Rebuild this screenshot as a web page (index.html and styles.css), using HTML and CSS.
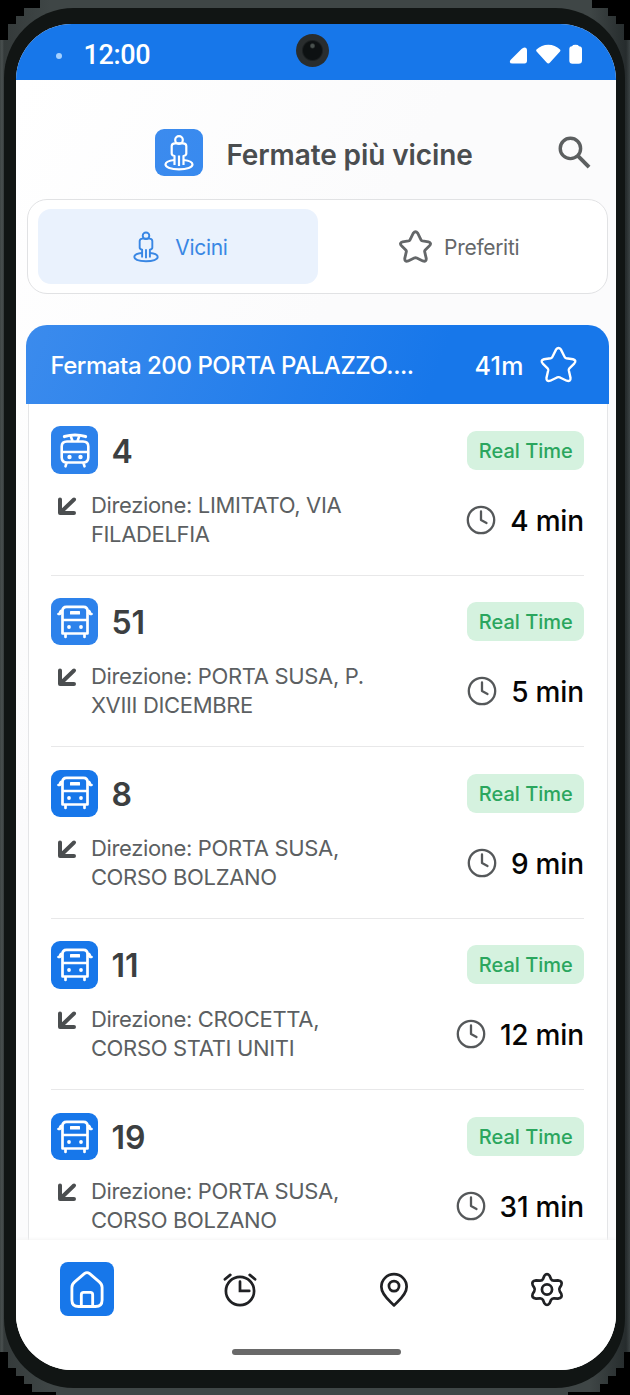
FILE: index.html
```
<!DOCTYPE html>
<html lang="it">
<head>
<meta charset="utf-8">
<title>Fermate più vicine</title>
<link rel="stylesheet" href="styles.css">
</head>
<body>
<svg class="sprite" aria-hidden="true">
  <symbol id="person" viewBox="0 0 30 36"><g fill="none" stroke="currentColor" stroke-width="2.200" stroke-linejoin="round"><circle cx="15" cy="5" r="3.800"/><path d="M11 8.300H19Q22.300 8.500 22.300 11V18.500Q22.300 20.500 19.500 21V30M11 8.300Q7.700 8.500 7.700 11V18.500Q7.700 20.500 10.500 21V30M15 20.500V31"/><path d="M10.500 25C5 25.500 1.500 27.300 1.500 29.600C1.500 32.400 7 34.400 15 34.400S28.500 32.400 28.500 29.600C28.500 27.300 25 25.500 19.500 25"/></g></symbol>
  <symbol id="star" viewBox="0 0 36 36"><path fill="none" stroke="currentColor" stroke-width="var(--sw)" stroke-linejoin="round" d="M15.600 3.500Q18 .4 20.400 3.500L24 10.700Q24.500 11.700 25.600 11.900L32.100 12.900Q36 14 33.300 17.100L28.600 21.700Q27.800 22.500 28 23.600L29.700 31Q30 35 26 33.800L19.400 30.600Q18 30 16.600 30.600L10 33.800Q6 35 6.300 31L8 23.600Q8.200 22.500 7.400 21.700L2.700 17.100Q0 14 3.900 12.900L10.400 11.900Q11.500 11.700 12 10.700Z"/></symbol>
  <symbol id="bus" viewBox="0 0 36 34"><g fill="none" stroke="currentColor" stroke-width="2.700" stroke-linejoin="round" stroke-linecap="round"><path d="M5.500 28.500V6Q5.500 1.800 9.500 1.800H26.500Q30.500 1.800 30.500 6V28.500ZM5.500 15H30.500M8.500 28.500V32M27.500 28.500V32M5.500 5.500Q3 5.500 2.800 9H1.500M30.500 5.500Q33 5.500 33.200 9H34.500"/></g><rect x="13" y="6" width="10" height="3.500" rx=".5" fill="currentColor"/><circle cx="12" cy="22" r="1.900" fill="currentColor"/><circle cx="24" cy="22" r="1.900" fill="currentColor"/></symbol>
  <symbol id="tram" viewBox="0 0 36 36"><g fill="none" stroke="currentColor" stroke-width="2.600" stroke-linejoin="round" stroke-linecap="round"><path d="M10 9.500H26Q31.300 9.500 31.300 14.500V25.500Q31.300 30.500 26 30.500H10Q4.700 30.500 4.700 25.500V14.500Q4.700 9.500 10 9.500ZM4.700 20H31.300M9.500 31L8.500 34.300M26.500 31L27.500 34.300M15.500 9L13.500 3.500M20.500 9L22.500 3.500"/><path d="M7.500 4.500Q18 1.500 28.500 4.500" stroke-width="3.200"/></g><circle cx="12.500" cy="25" r="2.200" fill="currentColor"/><circle cx="23.500" cy="25" r="2.200" fill="currentColor"/></symbol>
  <symbol id="arrow" viewBox="0 0 20 20"><path d="M17 3.500 4 16M3 3.500V17H17" fill="none" stroke="currentColor" stroke-width="4" stroke-linejoin="round" stroke-linecap="round"/></symbol>
  <symbol id="clock" viewBox="0 0 30 30"><g fill="none" stroke="currentColor" stroke-width="2.300" stroke-linecap="round"><circle cx="15" cy="15" r="13.200"/><path d="M15 6.500V15L20.500 18" stroke-linejoin="round"/></g></symbol>
</svg>
<div class="device">
<div class="bezel">
<main class="screen">
  <header class="status">
    <i class="dot"></i><span class="time">12:00</span>
    <svg class="signals" viewBox="0 0 74 20" fill="#fff"><path d="M15.500 3.500Q18 3.500 18 6.500V16.500Q18 19.500 15.500 19.500H3.500Q-.5 19.500 1.500 16L12.500 5Q14 3.500 15.500 3.500Z"/><path d="M27.500 5.500Q32.500 .8 39.300 .8T51 5.500Q51.800 6.500 51 7.500L41 18.500Q39.300 20.500 37.600 18.500L27.600 7.500Q26.800 6.500 27.500 5.500Z"/><path d="M63 2.200Q63.500 .8 66.500 .8T70 2.200Q73 2.500 73 5V16.500Q73 19.800 69.500 19.800H63.500Q60.300 19.800 60.300 16.500V5Q60.300 2.500 63 2.200Z"/></svg>
    <i class="camera"></i>
  </header>
  <div class="content">
    <div class="title-bar">
      <span class="tile"><svg class="ic-person"><use href="#person"/></svg></span>
      <h1>Fermate più vicine</h1>
      <svg class="search" viewBox="0 0 34 34" fill="none" stroke="#5c5f60"><circle cx="12.800" cy="12.800" r="10.500" stroke-width="3.500"/><path d="M20.500 20.500 32 32" stroke-width="4"/></svg>
    </div>
    <nav class="tabs">
      <div class="tab active"><svg class="ic-near"><use href="#person"/></svg><span>Vicini</span></div>
      <div class="tab saved"><svg class="ic-fav"><use href="#star"/></svg><span>Preferiti</span></div>
    </nav>
    <section class="card">
      <div class="stop"><span class="stop-name">Fermata 200 PORTA PALAZZO....</span><span class="distance">41m</span><svg class="ic-star"><use href="#star"/></svg></div>
      <div class="lines">
        <article class="line">
          <div class="line-top"><span class="tile"><svg class="ic-tram"><use href="#tram"/></svg></span><b>4</b><span class="live">Real Time</span></div>
          <div class="line-info"><svg class="ic-arrow"><use href="#arrow"/></svg><p>Direzione: LIMITATO, VIA<br>FILADELFIA</p><svg class="ic-clock"><use href="#clock"/></svg><span class="wait">4 min</span></div>
        </article>
        <article class="line">
          <div class="line-top"><span class="tile"><svg class="ic-bus"><use href="#bus"/></svg></span><b>51</b><span class="live">Real Time</span></div>
          <div class="line-info"><svg class="ic-arrow"><use href="#arrow"/></svg><p>Direzione: PORTA SUSA, P.<br>XVIII DICEMBRE</p><svg class="ic-clock"><use href="#clock"/></svg><span class="wait">5 min</span></div>
        </article>
        <article class="line">
          <div class="line-top"><span class="tile deep"><svg class="ic-bus"><use href="#bus"/></svg></span><b>8</b><span class="live">Real Time</span></div>
          <div class="line-info"><svg class="ic-arrow"><use href="#arrow"/></svg><p>Direzione: PORTA SUSA,<br>CORSO BOLZANO</p><svg class="ic-clock"><use href="#clock"/></svg><span class="wait">9 min</span></div>
        </article>
        <article class="line">
          <div class="line-top"><span class="tile deep"><svg class="ic-bus"><use href="#bus"/></svg></span><b>11</b><span class="live">Real Time</span></div>
          <div class="line-info"><svg class="ic-arrow"><use href="#arrow"/></svg><p>Direzione: CROCETTA,<br>CORSO STATI UNITI</p><svg class="ic-clock"><use href="#clock"/></svg><span class="wait">12 min</span></div>
        </article>
        <article class="line">
          <div class="line-top"><span class="tile deep"><svg class="ic-bus"><use href="#bus"/></svg></span><b>19</b><span class="live">Real Time</span></div>
          <div class="line-info"><svg class="ic-arrow"><use href="#arrow"/></svg><p>Direzione: PORTA SUSA,<br>CORSO BOLZANO</p><svg class="ic-clock"><use href="#clock"/></svg><span class="wait">31 min</span></div>
        </article>
      </div>
    </section>
  </div>
  <footer class="bottom">
    <nav class="menu">
      <span class="home"><svg viewBox="0 0 36 40" fill="none" stroke="#fff" stroke-width="3" stroke-linejoin="round"><path d="M15.200 3.200Q18 1 20.800 3.200L31 12Q34 14.500 34 18V31Q34 38 27 38H9Q2 38 2 31V18Q2 14.500 5 12ZM12 38V25.500Q12 23 14.500 23H21.500Q24 23 24 25.500V38"/></svg></span>
      <svg viewBox="0 0 36 36" fill="none" stroke="#202124" stroke-width="2.800"><circle cx="18" cy="19.500" r="14.500"/><path d="M18 10V19.500H27.500M2.500 7.500 8 3M33.500 7.500 28 3" stroke-linecap="round"/></svg>
      <svg viewBox="0 0 36 36" fill="none" stroke="#202124" stroke-width="2.800" stroke-linejoin="round"><path d="M18 34.300C15.500 31 5 24.500 5 15.200A13 13 0 0 1 31 15.200C31 24.500 20.500 31 18 34.300Z"/><circle cx="18" cy="14.500" r="5.200"/></svg>
      <svg viewBox="0 0 36 36" fill="none" stroke="#202124" stroke-width="2.800" stroke-linejoin="round"><path d="M15.300 3.900Q18 .3 20.700 3.900L22 7Q23 9 25.200 8.900L29.300 8.700Q34.300 9.200 32.700 13.500L31.100 16.200Q30 18 31.100 19.800L32.700 22.500Q34.300 26.800 29.300 27.300L25.200 27.100Q23 27 22 29L20.700 32.100Q18 35.700 15.300 32.100L14 29Q13 27 10.800 27.100L6.700 27.300Q1.700 26.800 3.300 22.500L4.900 19.800Q6 18 4.900 16.200L3.300 13.500Q1.700 9.200 6.700 8.700L10.800 8.900Q13 9 14 7Z"/><circle cx="18" cy="18" r="5.200"/></svg>
    </nav>
    <i class="handle"></i>
  </footer>
</main>
</div>
</div>
</body>
</html>
```
FILE: styles.css
```
* { box-sizing: border-box; }
body { margin: 0; background: #000; font-family: Inter, "Liberation Sans", sans-serif; color: #3c3f41; }
svg { display: block; flex: none; }
.sprite { position: absolute; width: 0; height: 0; }
.device {
  width: 630px; height: 1395px; padding: 8px 5px 7px 4px;
  background: linear-gradient(90deg, #3c4342 0, #4a5050 2px, #343a3a 4px, #3f4646 50px, #3f4646 590px, #262c2d 626px, #3c4344 630px);
  clip-path: polygon(40px 0, 592px 0, 592px 8px, 608px 8px, 608px 16px, 616px 16px, 616px 24px, 624px 24px, 624px 40px, 630px 40px, 630px 1352px, 624px 1352px, 624px 1368px, 616px 1368px, 616px 1376px, 608px 1376px, 608px 1384px, 600px 1384px, 600px 1392px, 568px 1392px, 568px 1395px, 56px 1395px, 56px 1392px, 32px 1392px, 32px 1384px, 24px 1384px, 24px 1376px, 16px 1376px, 16px 1368px, 8px 1368px, 8px 1352px, 0 1352px, 0 40px, 8px 40px, 8px 24px, 16px 24px, 16px 16px, 24px 16px, 24px 8px, 40px 8px);
}
.bezel { height: 100%; padding: 16px 9px 17px 12.400px; border-radius: 70px; background: #111514; }
.screen { height: 1346px; width: 600px; display: flex; flex-direction: column; overflow: hidden; border-radius: 56px; background: #fff; }
.status { position: relative; flex: none; height: 56px; padding: 5px 33px 0 40px; display: flex; align-items: center; background: #1777ea; color: #fff; }
.dot { width: 6px; height: 6px; border-radius: 50%; background: #a5d1ff; margin-top: 3px; }
.time { margin-left: 21px; font: 500 27px/30px Roboto, sans-serif; letter-spacing: -.3px; padding-top: 1px; }
.signals { width: 74px; height: 20px; margin-left: auto; margin-top: -1px; }
.camera { position: absolute; left: 279.600px; top: 10px; width: 33px; height: 33px; border-radius: 50%; background: radial-gradient(circle at 50% 36%, #49514e 0 1.500px, transparent 3px), radial-gradient(circle, #0d1112 0 9px, #292d2e 11px); }
.content { flex: 1; min-height: 0; overflow: hidden; padding: 45px 7.600px 0 10px; background: linear-gradient(120deg, #fff, #fbfbfc 35%); }
.title-bar { height: 55px; padding: 0 18px 0 129px; display: flex; align-items: center; }
.tile { width: 47.500px; height: 47.500px; flex: none; display: grid; place-items: center; border-radius: 9px; background: linear-gradient(120deg, #3c8bee, #388aef); color: #fff; }
.ic-person { width: 30px; height: 36px; }
h1 { margin: 0 0 0 23.500px; font-size: 28px; line-height: 36px; font-weight: 600; letter-spacing: -.1px; color: #4a4d4f; padding-top: 4px; }
.search { width: 33px; height: 33px; margin-left: auto; }
.tabs { margin: 19px 0 0 1px; width: 581px; height: 95px; border: 1.500px solid #e1e2e4; border-radius: 20px; padding: 9px 9px 9px 9.600px; display: grid; grid-template-columns: 280px 1fr; background: #fff; }
.tab { display: flex; align-items: center; justify-content: center; font-size: 21px; line-height: 26px; letter-spacing: -.3px; color: #646769; border-radius: 13px; }
.tab span { padding-top: 2px; }
.tab.active { padding-left: 5px; background: #eaf2fd; color: #3987e4; }
.tab.saved { padding-left: 2px; }
.ic-near { width: 26px; height: 32px; margin-right: 16px; }
.ic-fav { width: 33px; height: 33px; margin-right: 12px; --sw: 3.100; }
.card { margin-top: 31px; }
.stop { height: 79px; padding: 2px 32px 0 24px; display: flex; align-items: center; border-radius: 21px 21px 0 0; color: #fff; background: linear-gradient(110deg, #3b8bed 0, #1777ea 70%); font-size: 24px; line-height: 32px; font-weight: 500; }
.stop-name { white-space: nowrap; letter-spacing: -.45px; }
.distance { margin-left: auto; font-size: 25px; letter-spacing: .3px; }
.ic-star { width: 37px; height: 37px; margin: -3px 0 0 16px; --sw: 2.300; }
.lines { margin: 0 1px 0 1.500px; padding: 0 23px 0 22px; border: solid #e4e5e7; border-width: 0 1.500px; background: #fff; }
.line { height: 171.600px; padding-top: 22.400px; border-bottom: 1.500px solid #e8e8e9; }
.line-top { height: 47.500px; display: flex; align-items: center; }
.line .tile { background: #2d82eb; }
.line .tile.deep { background: #1777ea; }
.ic-tram { width: 36px; height: 36px; }
.ic-bus { width: 36px; height: 34px; }
.line b { margin-left: 13px; font-size: 32px; font-weight: 600; line-height: 40px; padding-top: 3px; }
.live { margin-left: auto; width: 117px; height: 39px; display: grid; place-items: center; padding: 1px 0 0 1px; border-radius: 9px; background: #d5f2df; color: #2ba65e; font-size: 20px; font-weight: 500; }
.line-info { display: flex; align-items: center; margin-top: 15.800px; height: 60px; }
.ic-arrow { width: 20px; height: 20px; margin: 6px 13px 0 6.500px; align-self: flex-start; color: #4b4e50; }
.line p { margin: 0; font-size: 22px; line-height: 29px; letter-spacing: -.34px; color: #5c5f62; white-space: nowrap; padding-left: .5px; }
.ic-clock { width: 30px; height: 30px; margin-left: auto; color: #55585a; }
.wait { margin-left: 14px; font-size: 28px; line-height: 36px; letter-spacing: -.2px; font-weight: 500; color: #050505; white-space: nowrap; padding-top: 2px; }
.bottom { height: 130px; flex: none; background: #fff; box-shadow: 0 -1px 3px #f4f4f4; }
.menu { height: 98px; padding: 0 42px 0 43.500px; display: flex; align-items: center; justify-content: space-between; }
.menu > svg { width: 54px; height: 35px; }
.home { width: 54px; height: 54px; border-radius: 8px; display: grid; place-items: center; background: #1777ea; }
.home svg { width: 34px; height: 39px; }
.handle { display: block; width: 169px; height: 6px; margin: 11px 0 0 216px; border-radius: 3px; background: #696969; }
```
